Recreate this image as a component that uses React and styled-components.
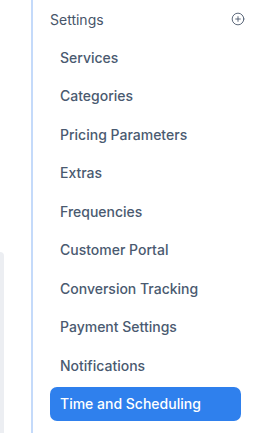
import styled, { createGlobalStyle } from "styled-components";
import { CirclePlus } from "lucide-react";

const GlobalStyle = createGlobalStyle`
  html, body {
    margin: 0;
    padding: 0;
    background: #ffffff;
    font-family: Inter, "Noto Sans", sans-serif;
  }
`;

const menuItems = [
  "Services",
  "Categories",
  "Pricing Parameters",
  "Extras",
  "Frequencies",
  "Customer Portal",
  "Conversion Tracking",
  "Payment Settings",
  "Notifications",
  "Time and Scheduling",
];

const App = () => {
  const active = "Time and Scheduling";

  return (
    <>
      <GlobalStyle />
      <Page>
        <LeftPane>
          <EdgeCard />
        </LeftPane>
        <Sidebar>
          <Header>
            <span>Settings</span>
            <CirclePlus size={14} strokeWidth={1.5} />
          </Header>
          <Menu>
            {menuItems.map((name) => (
              <MenuItem key={name} $active={name === active}>
                {name}
              </MenuItem>
            ))}
          </Menu>
        </Sidebar>
      </Page>
    </>
  );
};

export default App;

const Page = styled.div`
  display: flex;
  width: 266px;
  height: 433px;
  overflow: hidden;
`;

const LeftPane = styled.div`
  width: 31px;
  flex-shrink: 0;
  display: flex;
  flex-direction: column;
  padding-top: 252px;
  box-sizing: border-box;
`;

const EdgeCard = styled.div`
  width: 4px;
  flex: 1;
  background: #eceef2;
  border-top-right-radius: 4px;
`;

const Sidebar = styled.nav`
  flex: 1;
  border-left: 2px solid #c4dafa;
  padding: 2px 21px 0 17px;
  box-sizing: border-box;
`;

const Header = styled.div`
  height: 34px;
  display: flex;
  align-items: center;
  justify-content: space-between;
  font-size: 14px;
  color: #475569;
  font-weight: 400;

  svg {
    color: #475569;
    margin-top: -1px;
  }
`;

const Menu = styled.ul`
  list-style: none;
  margin: 4px 4px 0 0;
  padding: 0;
  display: flex;
  flex-direction: column;
  gap: 4.5px;
`;

const MenuItem = styled.li`
  height: 34px;
  display: flex;
  align-items: center;
  padding-left: 10px;
  border-radius: 7px;
  font-size: 14px;
  font-weight: 500;
  color: ${({ $active }) => ($active ? "#ffffff" : "#4a5a70")};
  background: ${({ $active }) => ($active ? "#2f80ed" : "transparent")};
`;
